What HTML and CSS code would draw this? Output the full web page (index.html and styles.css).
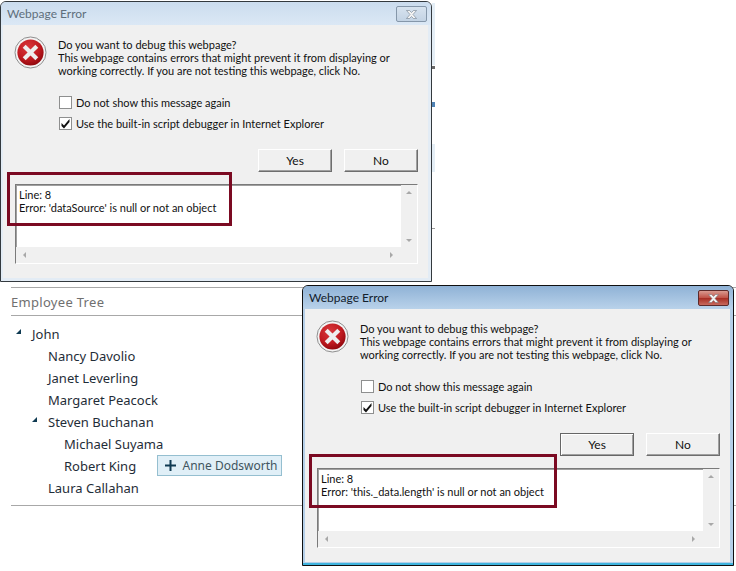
FILE: index.html
```html
<!DOCTYPE html>
<html>
<head>
  <title>Webpage Error</title>
  <link rel="stylesheet" href="styles.css">
</head>
<body>
  <div class="tree-panel">
    <h2 class="tree-title">Employee Tree</h2>
    <ul class="tree">
      <li class="node"><span class="arrow"></span>John</li>
      <li class="node level-1">Nancy Davolio</li>
      <li class="node level-1">Janet Leverling</li>
      <li class="node level-1">Margaret Peacock</li>
      <li class="node level-1"><span class="arrow"></span>Steven Buchanan</li>
      <li class="node level-2">Michael Suyama</li>
      <li class="node level-2">Robert King
        <span class="drag-tip">
          <svg class="plus" width="11" height="11" viewBox="0 0 11 11"><path d="M4.500 0h2v4.500h4.500v2h-4.500v4.500h-2v-4.500h-4.500v-2h4.500z"/></svg>
          Anne Dodsworth
        </span>
      </li>
      <li class="node level-1">Laura Callahan</li>
    </ul>
  </div>

  <!-- bits of the page that stick out right of the first dialog -->
  <div class="peek">
    <span class="peek-pale"></span>
    <span class="peek-dark"></span>
    <span class="peek-blue"></span>
    <span class="peek-pale peek-low"></span>
    <span class="peek-line"></span>
  </div>

  <div class="dialog dialog-back">
    <div class="titlebar">
      <span class="caption">Webpage Error</span>
      <span class="close close-off"><svg width="15" height="11" viewBox="0 0 15 11"><path class="x" d="M2.500 1.500h3l2 2 2-2h3l-3.500 4 3.500 4h-3l-2-2-2 2h-3l3.500-4z"/></svg></span>
    </div>
    <div class="client">
      <div class="message">
        <svg class="error-icon" width="33" height="33" viewBox="0 0 34 34">
          <defs>
            <radialGradient id="redA" cx="40%" cy="30%" r="75%">
              <stop offset="0" stop-color="#d8383c"/>
              <stop offset="0.6" stop-color="#c01a20"/>
              <stop offset="1" stop-color="#8c060c"/>
            </radialGradient>
          </defs>
          <circle cx="17" cy="17" r="16" fill="#f4f4f4" stroke="#8a8a8a"/>
          <circle cx="17" cy="17" r="13.500" fill="url(#redA)"/>
          <path d="M9 12l3-3 5 5 5-5 3 3-5 5 5 5-3 3-5-5-5 5-3-3 5-5z" fill="#eee"/>
        </svg>
        <div class="text">
          Do you want to debug this webpage?<br>
          This webpage contains errors that might prevent it from displaying or<br>
          working correctly. If you are not testing this webpage, click No.
        </div>
      </div>
      <div class="options">
        <div class="option"><span class="check"></span>Do not show this message again</div>
        <div class="option"><span class="check"><svg width="11" height="11" viewBox="0 0 11 11"><path d="M1.500 5l2.500 2.500 5.500-6.500v3l-5.500 6.500-2.500-2.500z"/></svg></span>Use the built-in script debugger in Internet Explorer</div>
      </div>
      <div class="buttons">
        <span class="btn">Yes</span>
        <span class="btn">No</span>
      </div>
      <div class="details">
        <div class="details-top">
          <div class="details-text">Line: 8<br>Error: 'dataSource' is null or not an object</div>
          <div class="vscroll"><span class="up"></span><span class="down"></span></div>
        </div>
        <div class="hscroll"><span class="left"></span><span class="right"></span></div>
      </div>
    </div>
    <div class="callout callout-short"></div>
  </div>

  <div class="dialog dialog-front">
    <div class="titlebar">
      <span class="caption">Webpage Error</span>
      <span class="close close-on"><svg width="15" height="11" viewBox="0 0 15 11"><path class="x" d="M2.500 1.500h3l2 2 2-2h3l-3.500 4 3.500 4h-3l-2-2-2 2h-3l3.500-4z"/></svg></span>
    </div>
    <div class="client">
      <div class="message">
        <svg class="error-icon" width="33" height="33" viewBox="0 0 34 34">
          <circle cx="17" cy="17" r="16" fill="#f4f4f4" stroke="#8a8a8a"/>
          <circle cx="17" cy="17" r="13.500" fill="url(#redA)"/>
          <path d="M9 12l3-3 5 5 5-5 3 3-5 5 5 5-3 3-5-5-5 5-3-3 5-5z" fill="#eee"/>
        </svg>
        <div class="text">
          Do you want to debug this webpage?<br>
          This webpage contains errors that might prevent it from displaying or<br>
          working correctly. If you are not testing this webpage, click No.
        </div>
      </div>
      <div class="options">
        <div class="option"><span class="check"></span>Do not show this message again</div>
        <div class="option"><span class="check"><svg width="11" height="11" viewBox="0 0 11 11"><path d="M1.500 5l2.500 2.500 5.500-6.500v3l-5.500 6.500-2.500-2.500z"/></svg></span>Use the built-in script debugger in Internet Explorer</div>
      </div>
      <div class="buttons">
        <span class="btn btn-default">Yes</span>
        <span class="btn">No</span>
      </div>
      <div class="details">
        <div class="details-top">
          <div class="details-text">Line: 8<br>Error: 'this._data.length' is null or not an object</div>
          <div class="vscroll"><span class="up"></span><span class="down"></span></div>
        </div>
        <div class="hscroll"><span class="left"></span><span class="right"></span></div>
      </div>
    </div>
    <div class="callout callout-long"></div>
  </div>
</body>
</html>
```
FILE: styles.css
```css
html, body {
  margin: 0;
  height: 100%;
  overflow: hidden;
}
body {
  position: relative;
  width: 736px;
  height: 571px;
  background: #fff;
  font-family: "Noto Sans", sans-serif;
}

/* tree behind the dialogs */
.tree-panel {
  box-sizing: border-box;
  width: 725px;
  margin: 287px 0 0 11px;
  height: 219px;
  border-top: 1px solid #a8a8a8;
  border-bottom: 1px solid #a8a8a8;
}
.tree-title {
  margin: 0;
  height: 27px;
  line-height: 29px;
  font-size: 13px;
  letter-spacing: 0.3px;
  font-weight: normal;
  color: #707070;
  border-bottom: 1px solid #a8a8a8;
}
.tree {
  list-style: none;
  margin: 7px 0 0;
  padding: 0;
}
.node {
  position: relative;
  height: 22px;
  line-height: 22px;
  padding-left: 21px;
  font-size: 13px;
  color: #1f2d38;
}
.level-1 { padding-left: 37px; }
.level-2 { padding-left: 53px; }
.arrow {
  position: absolute;
  margin: 6px 0 0 -16px;
  width: 0;
  height: 0;
  border-left: 5px solid transparent;
  border-bottom: 5px solid #0f3a52;
}
.drag-tip {
  display: inline-flex;
  align-items: center;
  gap: 7px;
  box-sizing: border-box;
  width: 125px;
  height: 21px;
  margin-left: 17px;
  padding: 0 5px 0 7px;
  background: #e0eff7;
  border: 1px solid #95bfd0;
  color: #405560;
  font-size: 12px;
  vertical-align: top;
  white-space: nowrap;
}
.plus { fill: #0f3a52; flex: none; }

/* scraps of page right of the first dialog */
.peek {
  position: absolute;
  left: 432px;
  top: 3px;
  width: 3px;
  display: flex;
  flex-direction: column;
}
.peek-pale { height: 62px; background: #e4eef6; }
.peek-low { height: 28px; margin-top: 37px; }
.peek-dark { height: 3px; margin-top: 1px; background: #6a6a6a; }
.peek-blue { height: 5px; margin-top: 33px; background: #4f82b4; }
.peek-line { height: 1px; margin-top: 56px; background: #9a9a9a; }

/* dialog window */
.dialog {
  position: absolute;
  box-sizing: border-box;
  width: 432px;
  height: 281px;
  border: 1px solid #33393e;
  border-radius: 6px 6px 0 0;
  font-family: "Lato", "Noto Sans", sans-serif;
  font-size: 11px;
  color: #111;
}
.dialog-back {
  left: 0;
  top: 1px;
  background: #e3ecf5;
}
.dialog-front {
  left: 302px;
  top: 285px;
  background: #b5cfe8;
  border-color: #101010;
  box-shadow: inset 0 -2px 0 #3fb4de;
}
.titlebar {
  display: flex;
  justify-content: space-between;
  height: 23px;
  padding: 0 4px 0 6px;
  border-radius: 5px 5px 0 0;
}
.dialog-back .titlebar { background: linear-gradient(#cbdcee, #dbe8f5); }
.dialog-front .titlebar { background: linear-gradient(#8fb2d6, #b9d2ea); }
.caption {
  font-size: 12px;
  line-height: 24px;
  color: #5f6f7c;
}
.dialog-front .caption { color: #12202c; }
.close {
  display: flex;
  align-items: center;
  justify-content: center;
  box-sizing: border-box;
  width: 31px;
  height: 16px;
  margin-top: 4px;
  border-radius: 2px;
}
.close-off {
  background: linear-gradient(#d7e3ef, #c3d3e4);
  border: 1px solid #8597aa;
}
.close-on {
  background: linear-gradient(#d99a90 0, #bf5146 50%, #a62c22 51%, #c76a5e 100%);
  border: 1px solid #5c2a2a;
}
.x { fill: #f3f3f3; stroke: #6b6f76; stroke-width: 0.500; }
.close-off .x { stroke: #5a6a7a; }
.client {
  box-sizing: border-box;
  height: 253px;
  margin: 0 3px 0 2px;
  padding: 12px 10px 0 12px;
  background: #f0f0f0;
}
.message {
  display: flex;
  gap: 11px;
}
.error-icon { flex: none; margin: -1px 0 0 -1px; }
.text {
  line-height: 13px;
  padding-top: 1px;
  white-space: nowrap;
}
.options {
  margin: 15px 0 0 44px;
}
.option {
  display: flex;
  align-items: center;
  gap: 4px;
  height: 21px;
}
.check {
  display: flex;
  align-items: center;
  justify-content: center;
  box-sizing: border-box;
  width: 13px;
  height: 13px;
  background: #fff;
  border: 1px solid #8e8f8f;
}
.check svg { fill: #111; }
.buttons {
  display: flex;
  justify-content: flex-end;
  gap: 12px;
  margin-top: 15px;
}
.btn {
  box-sizing: border-box;
  width: 74px;
  height: 23px;
  font-size: 12px;
  line-height: 21px;
  text-align: center;
  background: #f0f0f0;
  border: 1px solid;
  border-color: #fff #6e6e6e #6e6e6e #fff;
  box-shadow: inset -1px -1px 0 #a0a0a0;
}
.btn-default {
  border: 1px solid #666;
  box-shadow: inset 1px 1px 0 #fff, inset -1px -1px 0 #a0a0a0;
}
.details {
  box-sizing: border-box;
  height: 80px;
  margin-top: 12px;
  border: 1px solid;
  border-color: #7a7a7a #fff #fff #7a7a7a;
  box-shadow: inset 1px 1px 0 #a0a0a0;
}
.details-top {
  display: flex;
  height: 62px;
}
.details-text {
  flex: 1;
  padding: 2px 2px;
  background: #fff;
  line-height: 13px;
  margin: 1px 0 0 1px;
}
.vscroll, .hscroll {
  position: relative;
  background: #f0f0f0;
}
.vscroll { width: 16px; }
.hscroll { height: 16px; }
.up, .down, .left, .right {
  position: absolute;
  width: 0;
  height: 0;
  border: 3px solid transparent;
}
.up { left: 5px; top: 6px; border-bottom: 3px solid #a8a8a8; border-top-width: 0; }
.down { left: 5px; bottom: 5px; border-top: 3px solid #a8a8a8; border-bottom-width: 0; }
.left { left: 7px; top: 5px; border-right: 3px solid #a8a8a8; border-left-width: 0; }
.right { right: 24px; top: 5px; border-left: 3px solid #a8a8a8; border-right-width: 0; }

/* red annotation boxes over the error text */
.callout {
  position: absolute;
  left: 6px;
  box-sizing: border-box;
  height: 54px;
  border: 3px solid #7b0a22;
}
.callout-short { top: 170px; width: 225px; }
.callout-long { top: 168px; width: 248px; }
```
